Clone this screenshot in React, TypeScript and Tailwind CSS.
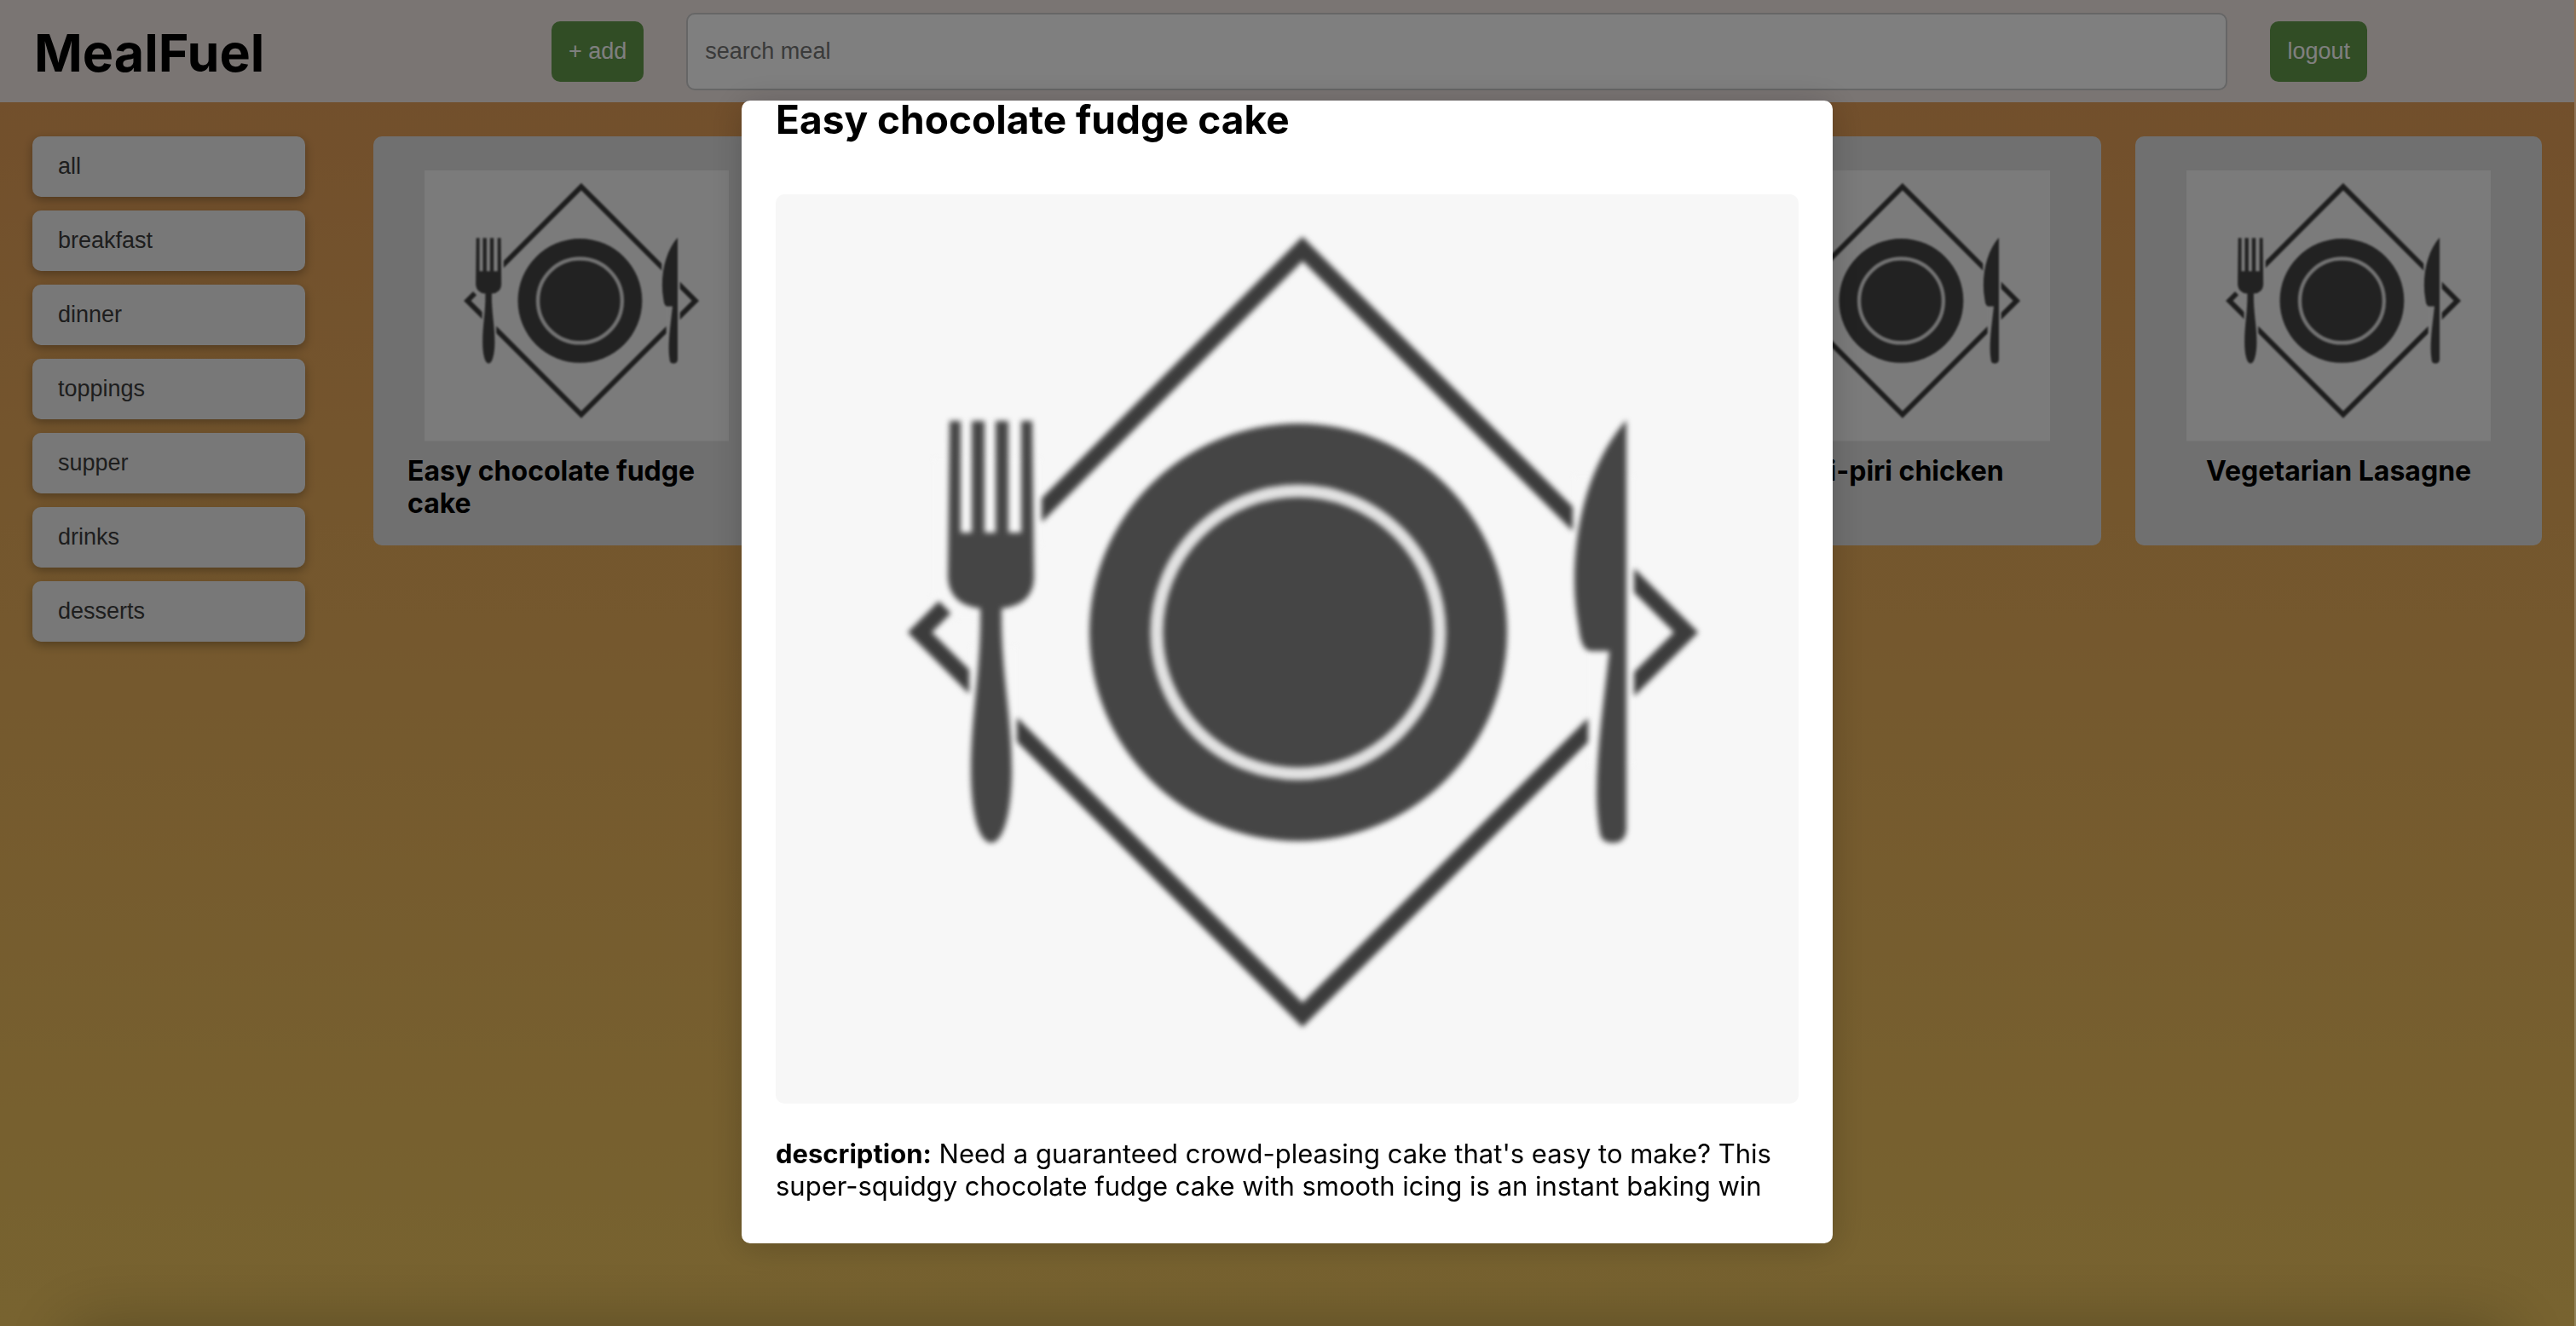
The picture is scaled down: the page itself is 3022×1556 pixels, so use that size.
import React from "react";

const categories = ["all", "breakfast", "dinner", "toppings", "supper", "drinks", "desserts"];

const meals = [
  "Easy chocolate fudge cake",
  "Pancakes",
  "Chicken curry",
  "Piri-piri chicken",
  "Vegetarian Lasagne",
];

function PlatePicture({ className }: { className: string }) {
  return (
    <svg viewBox="0 0 1200 1067" className={className} role="img" aria-label="Plate with fork and knife">
      <rect width="1200" height="1067" fill="#f7f7f7" />
      <g fill="#454545" style={{ filter: "blur(3px)" }}>
        {/* napkin outline, interrupted around the cutlery */}
        <path d="M618 64 L1068 514 L618 963 L169 514 Z" fill="none" stroke="#3c3c3c" strokeWidth="20" strokeMiterlimit="10" />
        <path
          d="M184 470 L212 498 H235 L312 410 V310 H184 Z M227 530 H283 V670 H227 Z M935 330 H1007 V514 H935 Z M953 514 H1007 V670 H953 Z"
          fill="#f7f7f7"
        />
        {/* plate */}
        <circle cx="613" cy="514" r="245" />
        <circle cx="613" cy="514" r="166" fill="none" stroke="#e2e2e2" strokeWidth="15" />
        {/* fork */}
        <path d="M204 266 H217 V397 H230 V266 H245 V397 H258 V266 H273 V397 H288 V266 H301 L303 450 Q302 482 265 486 C264 560 277 610 277 676 C277 725 267 761 253 761 C238 761 229 725 229 676 C229 610 241 560 240 486 Q204 482 202 450 Z" />
        {/* knife */}
        <path d="M998 265 V745 Q997 761 982 761 Q969 761 967 750 Q963 727 963 704 C963 650 972 590 978 536 H956 Q945 536 942 508 Q937 480 937 454 C937 380 958 310 998 265 Z" />
      </g>
    </svg>
  );
}

function Header() {
  return (
    <header className="flex h-[120px] items-center bg-[#f4eae7] pl-10">
      <h1 className="w-[607px] shrink-0 pt-1 text-[61px] leading-[72px] font-bold text-black">MealFuel</h1>
      <div className="flex flex-1 items-center gap-[50px] pr-[243px] font-['Liberation_Sans',sans-serif] text-[27px]">
        <button className="h-[71px] rounded-[10px] bg-[#639b4a] px-5 text-white">+ add</button>
        <input
          type="text"
          aria-label="search meal"
          placeholder="search meal"
          className="h-[91px] min-w-0 flex-1 rounded-[10px] border-2 border-[#ccc] bg-white px-5 placeholder:text-[#757575]"
        />
        <button className="h-[71px] rounded-[10px] bg-[#639b4a] px-5 text-white">logout</button>
      </div>
    </header>
  );
}

function Sidebar() {
  return (
    <nav className="flex w-[320px] shrink-0 flex-col gap-4 font-['Liberation_Sans',sans-serif] text-[27px]">
      {categories.map((name) => (
        <button
          key={name}
          className="h-[71px] rounded-[10px] bg-[#f1f1f1] px-[30px] text-left text-[#3c3c3c] shadow-[0_4px_12px_rgba(0,0,0,0.3)]"
        >
          {name}
        </button>
      ))}
    </nav>
  );
}

function MealCard({ title }: { title: string }) {
  return (
    <article className="flex min-h-[480px] min-w-0 flex-col items-center rounded-[10px] bg-[#e1e1e1] px-10 pt-10 pb-[30px]">
      <PlatePicture className="w-[90%]" />
      <h2 className="mt-4 text-[32px] leading-[38px] font-bold text-black">{title}</h2>
    </article>
  );
}

function MealDialog() {
  return (
    <div className="fixed inset-0 flex items-start justify-center overflow-hidden bg-black/50 pt-[118px] pr-[2px]">
      <section
        role="dialog"
        aria-modal="true"
        aria-labelledby="meal-title"
        className="w-[1280px] rounded-[10px] bg-white px-10 pt-[2px] pb-12 text-black shadow-[0_4px_40px_rgba(0,0,0,0.2)]"
      >
        <h2 id="meal-title" className="text-[46px] leading-10 font-bold">
          Easy chocolate fudge cake
        </h2>
        <PlatePicture className="mt-[68px] w-full rounded-[10px]" />
        <p className="mt-10 text-[31px] leading-[38px]">
          <strong>description:</strong> Need a guaranteed crowd-pleasing cake that's easy to make? This super-squidgy
          chocolate fudge cake with smooth icing is an instant baking win
        </p>
      </section>
      <div className="absolute inset-x-20 top-full h-40 shadow-[0_0_80px_rgba(0,0,0,0.25)]" />
      <div className="absolute inset-y-0 right-0 w-[2px] bg-white/20" />
    </div>
  );
}

export default function App() {
  return (
    <div className="flex min-h-screen flex-col bg-linear-to-b from-[#e49c58] to-[#f0c760] pr-[2px] font-[Inter,sans-serif]">
      <Header />
      <main className="flex gap-20 px-[38px] py-10">
        <Sidebar />
        <div className="grid flex-1 grid-cols-5 content-start gap-10">
          {meals.map((title) => (
            <MealCard key={title} title={title} />
          ))}
        </div>
      </main>
      <MealDialog />
    </div>
  );
}
